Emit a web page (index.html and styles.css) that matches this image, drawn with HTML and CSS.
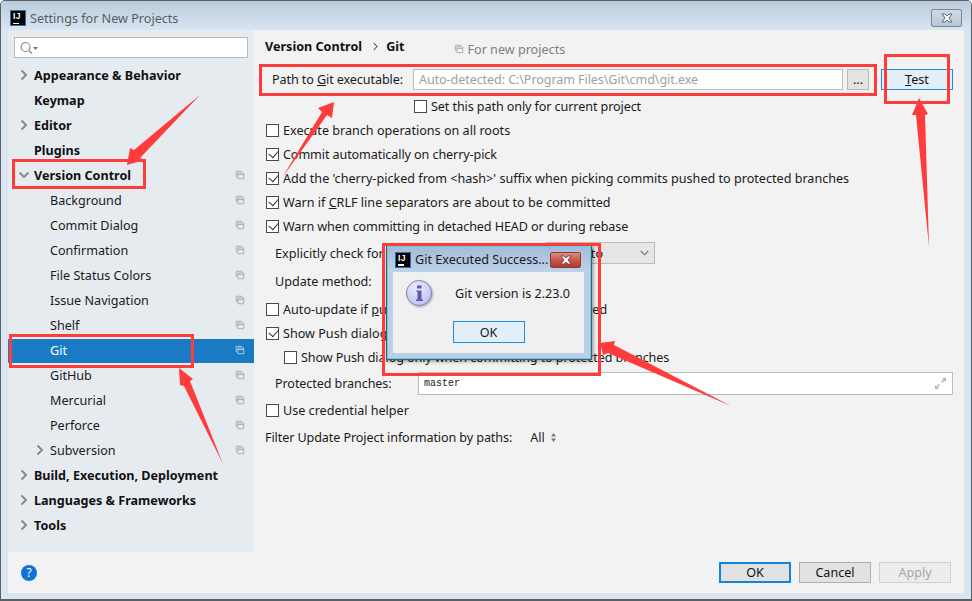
FILE: index.html
```html
<!DOCTYPE html>
<html lang="en">
<head>
<meta charset="utf-8">
<title>Settings for New Projects</title>
<link rel="stylesheet" href="styles.css">
</head>
<body>
<div class="window">
  <header class="titlebar">
    <span class="ij-logo"><span class="ij-text">IJ</span><span class="ij-bar"></span></span>
    <span class="title-text">Settings for New Projects</span>
    <span class="win-close"><svg width="14" height="10" viewBox="0 0 14 10"><path d="M2 1h3l2 2 2-2h3L9 5l3 4H9L7 7 5 9H2l3-4z" fill="#fff" stroke="#5c6672" stroke-width="1"/></svg></span>
  </header>
  <div class="content">
    <div class="panes">
      <aside class="sidebar">
        <div class="search">
          <svg width="20" height="14" viewBox="0 0 20 14"><circle cx="6.500" cy="6" r="4.500" fill="none" stroke="#8c8c8c" stroke-width="1.200"/><path d="M10 9.500l3 3" stroke="#8c8c8c" stroke-width="1.500"/><path d="M14 6h5l-2.500 3z" fill="#777"/></svg>
        </div>
        <ul class="tree">
          <li class="node top"><svg class="chev" viewBox="0 0 10 12"><path d="M2.500 1.500L7 6l-4.500 4.500"/></svg>Appearance &amp; Behavior</li>
          <li class="node top">Keymap</li>
          <li class="node top"><svg class="chev" viewBox="0 0 10 12"><path d="M2.500 1.500L7 6l-4.500 4.500"/></svg>Editor</li>
          <li class="node top">Plugins</li>
          <li class="node top open"><svg class="chev" viewBox="0 0 12 10"><path d="M1.500 2.500L6 7l4.500-4.500"/></svg>Version Control<svg class="copy" viewBox="0 0 12 12"><path d="M1.500 8.500v-7h7M3.500 3.500h7v7h-7zM3.500 5.500h7"/></svg></li>
          <li class="node sub">Background<svg class="copy" viewBox="0 0 12 12"><path d="M1.500 8.500v-7h7M3.500 3.500h7v7h-7zM3.500 5.500h7"/></svg></li>
          <li class="node sub">Commit Dialog<svg class="copy" viewBox="0 0 12 12"><path d="M1.500 8.500v-7h7M3.500 3.500h7v7h-7zM3.500 5.500h7"/></svg></li>
          <li class="node sub">Confirmation<svg class="copy" viewBox="0 0 12 12"><path d="M1.500 8.500v-7h7M3.500 3.500h7v7h-7zM3.500 5.500h7"/></svg></li>
          <li class="node sub">File Status Colors<svg class="copy" viewBox="0 0 12 12"><path d="M1.500 8.500v-7h7M3.500 3.500h7v7h-7zM3.500 5.500h7"/></svg></li>
          <li class="node sub">Issue Navigation<svg class="copy" viewBox="0 0 12 12"><path d="M1.500 8.500v-7h7M3.500 3.500h7v7h-7zM3.500 5.500h7"/></svg></li>
          <li class="node sub">Shelf<svg class="copy" viewBox="0 0 12 12"><path d="M1.500 8.500v-7h7M3.500 3.500h7v7h-7zM3.500 5.500h7"/></svg></li>
          <li class="node sub selected">Git<svg class="copy" viewBox="0 0 12 12"><path d="M1.500 8.500v-7h7M3.500 3.500h7v7h-7zM3.500 5.500h7"/></svg></li>
          <li class="node sub">GitHub<svg class="copy" viewBox="0 0 12 12"><path d="M1.500 8.500v-7h7M3.500 3.500h7v7h-7zM3.500 5.500h7"/></svg></li>
          <li class="node sub">Mercurial<svg class="copy" viewBox="0 0 12 12"><path d="M1.500 8.500v-7h7M3.500 3.500h7v7h-7zM3.500 5.500h7"/></svg></li>
          <li class="node sub">Perforce<svg class="copy" viewBox="0 0 12 12"><path d="M1.500 8.500v-7h7M3.500 3.500h7v7h-7zM3.500 5.500h7"/></svg></li>
          <li class="node sub"><svg class="chev" viewBox="0 0 10 12"><path d="M2.500 1.500L7 6l-4.500 4.500"/></svg>Subversion<svg class="copy" viewBox="0 0 12 12"><path d="M1.500 8.500v-7h7M3.500 3.500h7v7h-7zM3.500 5.500h7"/></svg></li>
          <li class="node top"><svg class="chev" viewBox="0 0 10 12"><path d="M2.500 1.500L7 6l-4.500 4.500"/></svg>Build, Execution, Deployment</li>
          <li class="node top"><svg class="chev" viewBox="0 0 10 12"><path d="M2.500 1.500L7 6l-4.500 4.500"/></svg>Languages &amp; Frameworks</li>
          <li class="node top"><svg class="chev" viewBox="0 0 10 12"><path d="M2.500 1.500L7 6l-4.500 4.500"/></svg>Tools</li>
        </ul>
      </aside>
      <main class="main">
        <div class="crumbs">
          <span class="crumb">Version Control</span>
          <svg class="crumb-sep" width="5" height="9" viewBox="0 0 5 9"><path d="M.8 1l3.200 3.500L.8 8" fill="none" stroke="#555" stroke-width="1.100"/></svg>
          <span class="crumb">Git</span>
          <span class="for-new"><svg class="copy" viewBox="0 0 12 12"><path d="M1.500 8.500v-7h7M3.500 3.500h7v7h-7zM3.500 5.500h7"/></svg>For new projects</span>
        </div>
        <div class="path-row">
          <span class="path-label tight">Path to <u>G</u>it executable:</span>
          <span class="input path-input tight">Auto-detected: C:\Program Files\Git\cmd\git.exe</span>
          <span class="btn-dots">...</span>
          <span class="btn-test"><span><u>T</u>est</span></span>
        </div>
        <label class="check set-path"><span class="box"></span><span class="tight">Set this path only for current project</span></label>
        <label class="check r1"><span class="box"></span><span>Execute branch operations on all roots</span></label>
        <label class="check"><span class="box on"></span><span class="tight">Commit automatically on cherry-pick</span></label>
        <label class="check"><span class="box on"></span><span>Add the 'cherry-picked from &lt;hash&gt;' suffix when picking commits pushed to protected branches</span></label>
        <label class="check"><span class="box on"></span><span>Warn if <u>C</u>RLF line separators are about to be committed</span></label>
        <label class="check"><span class="box on"></span><span class="tight">Warn when committing in detached HEAD or during rebase</span></label>
        <div class="field explicit">
          <span class="field-label">Explicitly check for incoming commits on remotes:</span>
          <span class="combo">Auto<svg width="9" height="6" viewBox="0 0 9 6"><path d="M.7 1l3.800 3.800L8.300 1" fill="none" stroke="#777" stroke-width="1.100"/></svg></span>
        </div>
        <div class="field update"><span class="field-label">Update method:</span></div>
        <label class="check auto"><span class="box"></span><span>Auto-update if <u>p</u>ush of the current branch was rejected</span></label>
        <label class="check"><span class="box on"></span><span>Show Push dialog for Commit and Push</span></label>
        <label class="check nested"><span class="box"></span><span class="tight">Show Push dialog only when committing to protected branches</span></label>
        <div class="field protected">
          <span class="field-label tight">Protected branches:</span>
          <span class="input branches">master<svg class="expand" width="13" height="13" viewBox="0 0 13 13"><path d="M8 1h4v4l-1.500-1.500L8 6 7 5l2.500-2.500zM5 12H1V8l1.500 1.500L5 7l1 1-2.500 2.500z" fill="#b5b5b5"/></svg></span>
        </div>
        <label class="check cred"><span class="box"></span><span>Use credential helper</span></label>
        <div class="filter"><span class="tight">Filter Update Project information by paths:</span><span class="filter-val">All<svg width="5" height="9" viewBox="0 0 5 9"><path d="M2.500 0L5 3.500H0zM2.500 9L0 5.500h5z" fill="#777"/></svg></span></div>
      </main>
    </div>
    <footer class="footer">
      <span class="help">?</span>
      <span class="btn primary">OK</span>
      <span class="btn">Cancel</span>
      <span class="btn disabled">Apply</span>
    </footer>
  </div>

  <div class="dialog">
    <div class="dlg-title">
      <span class="ij-logo"><span class="ij-text">IJ</span><span class="ij-bar"></span></span>
      <span class="dlg-title-text">Git Executed Success...</span>
      <span class="dlg-close"><svg width="14" height="10" viewBox="0 0 14 10"><path d="M2 1h3l2 2 2-2h3L9 5l3 4H9L7 7 5 9H2l3-4z" fill="#fff" stroke="#7a3030" stroke-width=".8"/></svg></span>
    </div>
    <div class="dlg-body">
      <div class="dlg-msg">
        <svg class="info" width="28" height="28" viewBox="0 0 28 28"><defs><radialGradient id="ig" cx=".4" cy=".3" r=".8"><stop offset="0" stop-color="#ebebff"/><stop offset="1" stop-color="#bcbcf2"/></radialGradient></defs><circle cx="14" cy="14" r="12.500" fill="url(#ig)" stroke="#8585b0" stroke-width="1"/><rect x="12" y="6.500" width="4.500" height="3" fill="#5a5aa6"/><path d="M11.500 11.500h5v9H18V22h-7v-1.500h1.500v-7.500h-1z" fill="#5a5aa6"/></svg>
        <span>Git version is 2.23.0</span>
      </div>
      <span class="dlg-ok">OK</span>
    </div>
  </div>

  <svg class="annot" width="972" height="601" viewBox="0 0 972 601">
    <g fill="none" stroke="#ff3b3b" stroke-width="3">
      <rect x="13.500" y="160.500" width="131" height="27"/>
      <rect x="260.500" y="65.500" width="615" height="29"/>
      <rect x="885.500" y="55.500" width="63" height="47"/>
      <rect x="383.500" y="244.500" width="216" height="130"/>
      <rect x="10.500" y="335.500" width="182" height="31"/>
    </g>
    <g fill="#ff3b3b">
      <polygon points="200,95 140,158 144,160 127,165 130,148 134,150"/>
      <polygon points="282,178 322,112 318,108 334,102 332,118 327,115"/>
      <polygon points="929,247 916,115 912,115 919,98 928,114 925,115"/>
      <polygon points="731,406 608,353 603,355 600,343 615,341 614,345"/>
      <polygon points="223,464 190,381 193,379 179,368 180,385 184,386"/>
    </g>
  </svg>
</div>
</body>
</html>
```
FILE: styles.css
```css
* { box-sizing: border-box; }
html, body { margin: 0; padding: 0; }
body { width: 972px; height: 601px; overflow: hidden; background: #fff; font-family: "Noto Sans", "Open Sans", sans-serif; font-size: 12.6px; color: #1a1a1a; }
ul { list-style: none; margin: 0; padding: 0; }
.tight { letter-spacing: -.1px; }
.window { position: relative; width: 972px; height: 601px; display: flex; flex-direction: column; border: 1px solid #5a5f66; border-radius: 5px 5px 0 0; border-width: 1px 1px 2px 1px; background: #d9e5f1; overflow: hidden; }
.titlebar { height: 29px; flex: none; display: flex; align-items: center; padding: 5px 0 0 9px; background: linear-gradient(#bccbdb, #d8e5f2); position: relative; }
.ij-logo { width: 16px; height: 16px; background: #000; border: 1px solid #2f6fb0; position: relative; flex: none; display: block; }
.ij-text { position: absolute; left: 2px; top: 0; font: bold 8.500px/10px "Liberation Sans", sans-serif; color: #fff; letter-spacing: .5px; }
.ij-bar { position: absolute; left: 2px; bottom: 1px; width: 6px; height: 1.500px; background: #fff; }
.title-text { margin-left: 4px; color: #555e68; }
.win-close { position: absolute; right: 9px; top: 8px; width: 31px; height: 18px; border: 1px solid #7b8694; border-radius: 2px; background: linear-gradient(#d0dbe6, #b9c6d4); display: flex; align-items: center; justify-content: center; }
.content { flex: 1; margin: 0 7px 6px 7px; display: flex; flex-direction: column; background: #f2f2f2; min-height: 0; }
.panes { flex: 1; display: flex; min-height: 0; }
.sidebar { width: 246px; background: #e6ebf0; flex: none; padding-top: 7px; }
.search { margin: 0 6px; height: 21px; width: 234px; background: #fff; border: 1px solid #b9b9b9; display: flex; align-items: center; padding-left: 4px; }
.tree { margin-top: 5px; }
.node { height: 25px; display: flex; align-items: center; position: relative; white-space: nowrap; color: #1a1a1a; }
.node.top { padding-left: 26px; font-weight: 700; color: #111; }
.node.sub { padding-left: 42px; }
.node.selected { background: #1b7ac4; color: #fff; height: 24px; margin-top: 1px; padding-bottom: 2px; }
.chev { position: absolute; width: 10px; height: 12px; left: 11px; top: 6px; fill: none; stroke: #8a8a8a; stroke-width: 2; }
.node.sub .chev { left: 27px; }
.node.open .chev { left: 10px; top: 7px; width: 12px; height: 10px; }
.copy { width: 10px; height: 10px; fill: none; stroke: #a9aeb3; stroke-width: 1.200; flex: none; }
.node .copy { position: absolute; left: 227px; top: 7px; }
.node.selected .copy { stroke: #a9c9e4; top: 6px; }
.main { flex: 1; padding: 4px 10px 0 11px; min-width: 0; }
.crumbs { height: 24px; display: flex; align-items: center; }
.crumb { font-weight: 700; color: #111; }
.crumb-sep { margin: 0 8px 0 11px; }
.for-new { margin-left: 50px; color: #7f7f7f; display: flex; align-items: center; gap: 3px; position: relative; top: 3px; }
.path-row { display: flex; align-items: center; height: 21px; margin-top: 11px; }
.path-label { margin-left: 7px; width: 141px; flex: none; }
.input { display: flex; align-items: center; background: #fff; border: 1px solid #bdbdbd; height: 100%; padding-left: 5px; }
.path-input { width: 430px; color: #a0a0a0; }
.btn-dots { width: 22px; height: 21px; margin-left: 4px; background: #e3e3e3; border: 1px solid #b8b8b8; display: flex; justify-content: center; align-items: center; }
.btn-test { width: 72px; height: 21px; margin-left: 12px; background: #e2eff9; border: 1px solid #1f8ee0; display: flex; justify-content: center; align-items: center; color: #111; }
.check { display: flex; align-items: center; height: 24px; padding-left: 1px; white-space: nowrap; }
.box { width: 13px; height: 13px; flex: none; margin-right: 4px; border: 1px solid #4a4a4a; background: #fff; position: relative; }
.box.on::after { content: ""; position: absolute; left: 1.500px; top: 1.500px; width: 8px; height: 4.500px; border-left: 1.200px solid #333; border-bottom: 1.200px solid #333; transform: rotate(-48deg); }
.set-path { height: 21px; margin-top: 6px; padding-left: 149px; }
.r1 { margin-top: 1px; }
.field { display: flex; align-items: center; padding-left: 10px; white-space: nowrap; position: relative; }
.field-label { flex: none; }
.explicit { height: 22px; margin-top: 4px; }
.combo { position: absolute; left: 280px; top: 0; width: 110px; height: 22px; background: #e6e6e6; border: 1px solid #bdbdbd; display: flex; align-items: center; justify-content: flex-end; gap: 37px; padding-right: 5px; }
.combo svg { flex: none; }
.update { height: 24px; margin-top: 5px; }
.auto { margin-top: 4px; }
.nested { padding-left: 19px; }
.protected { height: 23px; margin-top: 3px; }
.branches { position: absolute; left: 153px; top: 0; width: 535px; font: 10px "Liberation Mono", monospace; }
.expand { position: absolute; right: 5px; top: 4px; }
.cred { margin-top: 3px; }
.filter { height: 24px; margin-top: 3px; display: flex; align-items: center; white-space: nowrap; }
.filter-val { margin-left: 18px; display: flex; align-items: center; gap: 6px; }
.footer { height: 41px; flex: none; display: flex; align-items: center; justify-content: flex-end; gap: 8px; padding: 0 13px 0 0; position: relative; }
.help { position: absolute; left: 13px; top: 13px; width: 16px; height: 16px; border-radius: 50%; background: #1073d6; color: #fff; font-size: 12px; line-height: 16px; text-align: center; }
.btn { width: 72px; height: 21px; background: #e1e1e1; border: 1px solid #adadad; display: flex; align-items: center; justify-content: center; color: #111; }
.btn.primary { border: 2px solid #0f86dc; }
.btn.disabled { background: #ececec; border-color: #d0d0d0; color: #a6a6a6; }
.dialog { position: absolute; left: 385px; top: 244px; width: 206px; height: 115px; background: #b9d0e8; border: 1px solid #4b5a69; box-shadow: 0 0 0 1px #5ccfe6 inset, 1px 1px 4px rgba(0,0,0,.45); padding: 0 7px 6px 6px; display: flex; flex-direction: column; }
.dlg-title { height: 25px; flex: none; display: flex; align-items: center; position: relative; background: linear-gradient(#a4bcd8, #bcd3ea); margin: 1px -6px 0 -5px; padding-left: 7px; }
.dlg-title-text { margin-left: 4px; color: #1a1a1a; white-space: nowrap; }
.dlg-close { position: absolute; right: 9px; top: 5px; width: 31px; height: 16px; border-radius: 2px; border: 1px solid #8b3b36; background: linear-gradient(#dc8d84 0%, #c8584c 50%, #b23a2e 100%); display: flex; align-items: center; justify-content: center; }
.dlg-body { flex: 1; background: #f0f0f0; display: flex; flex-direction: column; align-items: center; position: relative; }
.dlg-msg { width: 100%; display: flex; align-items: center; padding: 7px 0 0 12px; }
.info { filter: drop-shadow(1px 1px 1px rgba(0,0,0,.3)); }
.dlg-msg span { margin-left: 22px; color: #1a1a1a; }
.dlg-ok { width: 72px; height: 22px; margin-top: 14px; border: 1px solid #1f8ee0; background: #e2eff9; display: flex; align-items: center; justify-content: center; }
.annot { position: absolute; left: -1px; top: -1px; pointer-events: none; }
```
